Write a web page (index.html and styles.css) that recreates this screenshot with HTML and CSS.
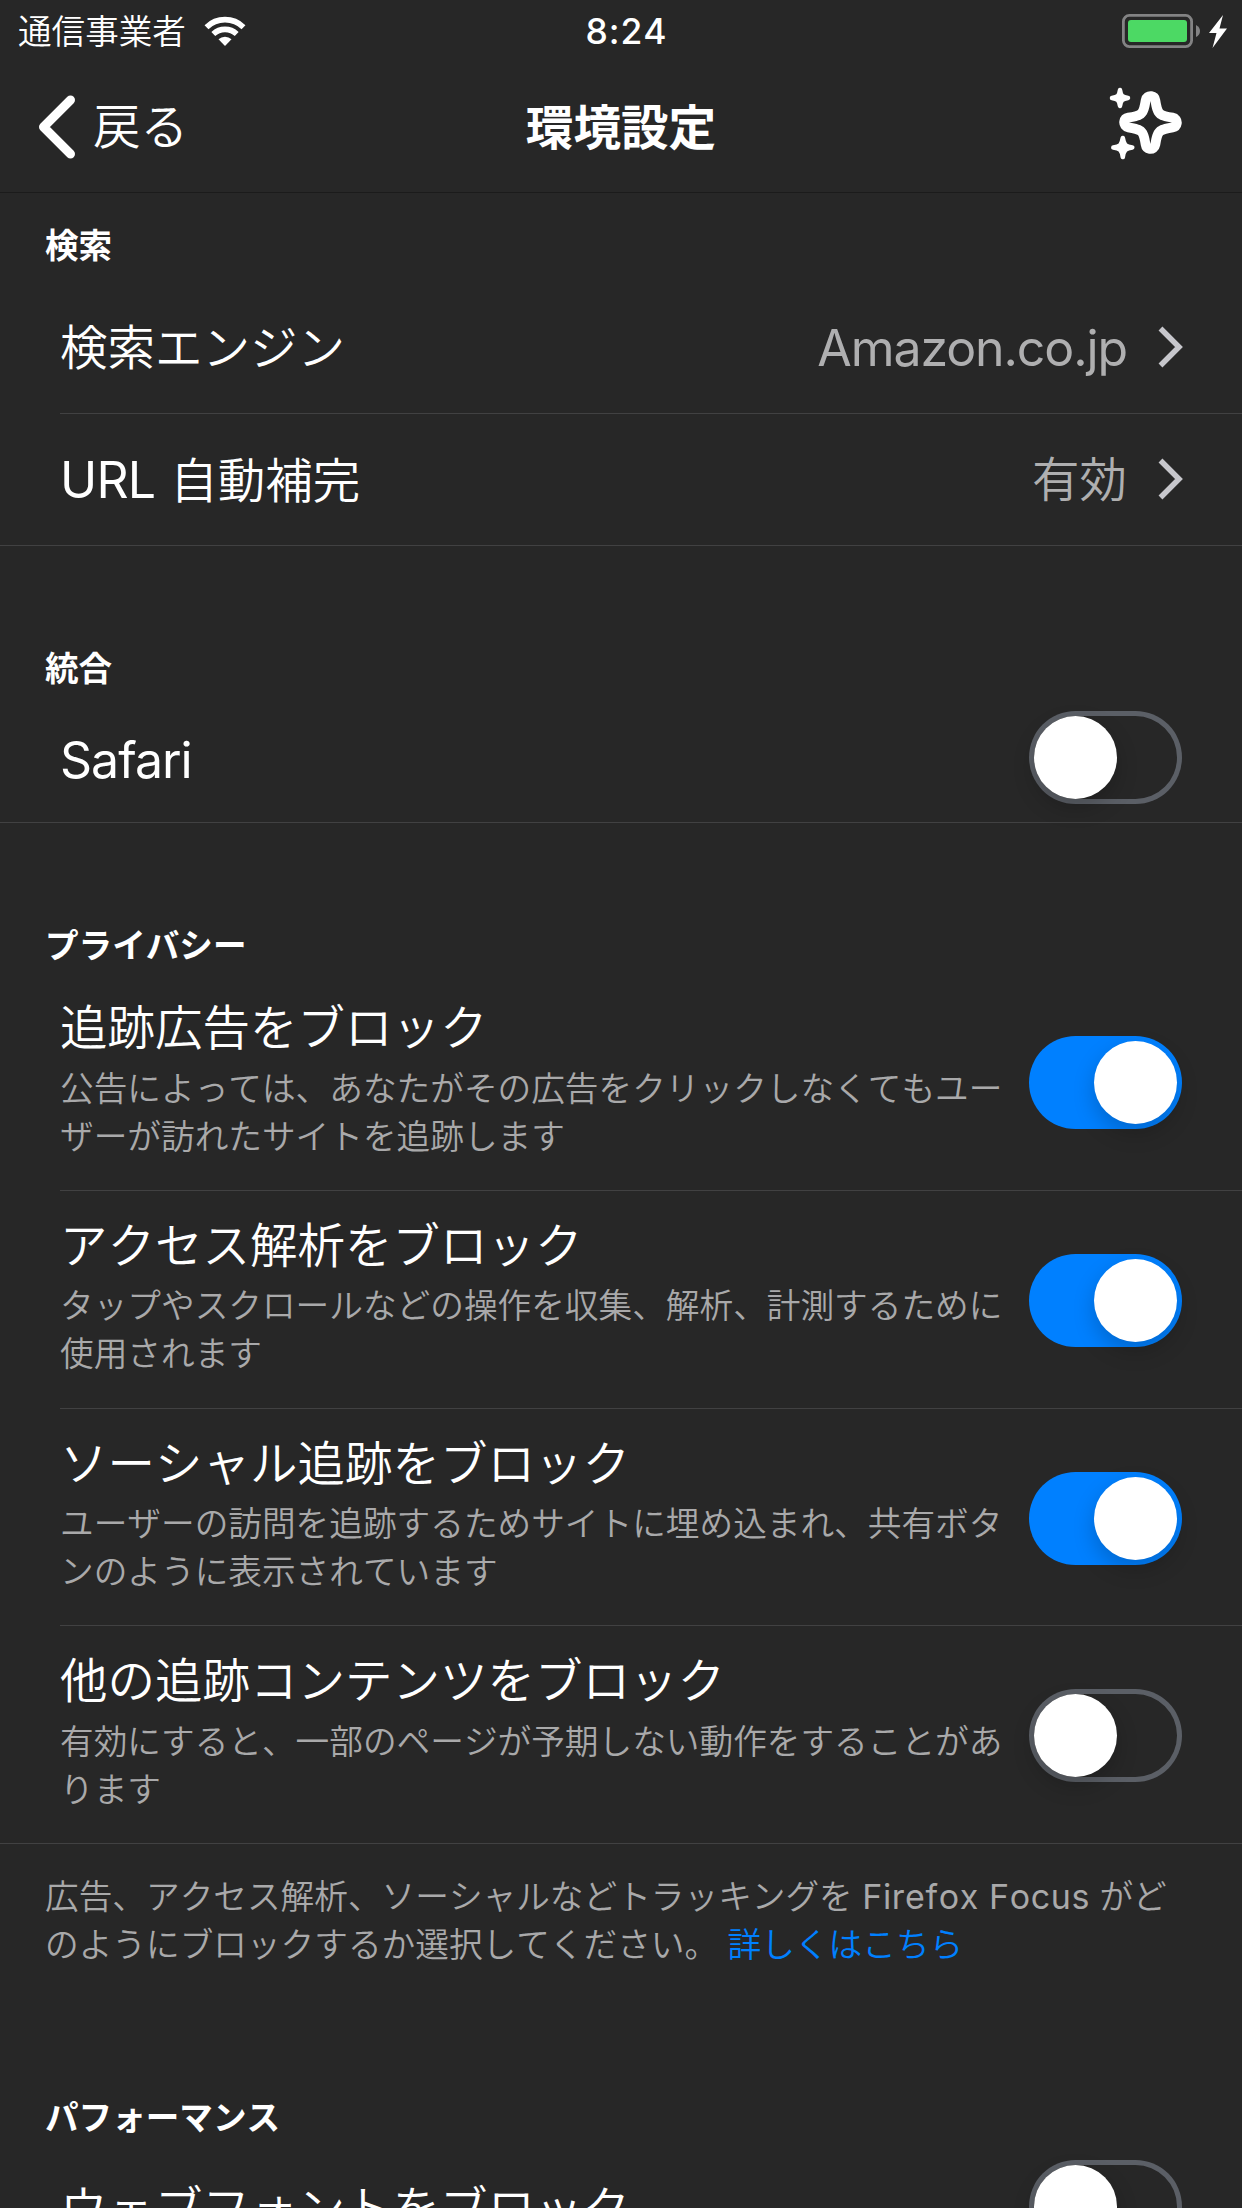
FILE: index.html
```html
<!DOCTYPE html>
<html lang="ja">
<head>
<meta charset="utf-8">
<title>環境設定</title>
<link rel="stylesheet" href="styles.css">
</head>
<body>
<div class="screen">
  <header class="top">
    <div class="status">
      <div class="carrier">
        <span class="carrier-name">通信事業者</span>
        <svg class="wifi" width="44" height="32" viewBox="0 0 44 32">
          <path d="M3.500 12.200A26.500 26.500 0 0 1 40.500 12.200M10.300 19A17 17 0 0 1 33.700 19" fill="none" stroke="#fff" stroke-width="5.600"/>
          <path d="M22 31L15.500 24.300A9.500 9.500 0 0 1 28.500 24.300Z" fill="#fff"/>
        </svg>
      </div>
      <time class="clock">8:24</time>
      <svg class="battery" width="108" height="36" viewBox="0 0 108 36">
        <rect x="1.400" y="1.400" width="68.200" height="31.200" rx="6" fill="none" stroke="#838384" stroke-width="2.800"/>
        <rect x="6" y="6" width="59" height="22" rx="3" fill="#4cd964"/>
        <path d="M74 11Q78 13 78 17T74 23Z" fill="#838384"/>
        <path d="M101 1L87 19H94.500L90.500 34L105 14.500H97.500Z" fill="#fff"/>
      </svg>
    </div>
    <nav class="nav">
      <a class="back">
        <svg width="40" height="66" viewBox="0 0 40 66"><path d="M32.500 6L5.500 33L32.500 60" fill="none" stroke="#fff" stroke-width="9" stroke-linecap="round" stroke-linejoin="round"/></svg>
        <span>戻る</span>
      </a>
      <h1 class="title">環境設定</h1>
      <svg class="sparkles" width="74" height="74" viewBox="0 0 74 74">
        <g transform="translate(41.500 36.500)">
          <path d="M0-21.500C2.500-5.500 5.500-2.500 21.500 0C5.500 2.500 2.500 5.500 0 21.500C-2.500 5.500-5.500 2.500-21.500 0C-5.500-2.500-2.500-5.500 0-21.500Z" fill="#272727" stroke="#fff" stroke-width="19.500" stroke-linejoin="round"/>
          <path d="M0-21.500C2.500-5.500 5.500-2.500 21.500 0C5.500 2.500 2.500 5.500 0 21.500C-2.500 5.500-5.500 2.500-21.500 0C-5.500-2.500-2.500-5.500 0-21.500Z" fill="#272727"/>
        </g>
        <g fill="#fff" stroke="#fff" stroke-width="4.500" stroke-linejoin="round">
          <path d="M11 4C12 10 13 11 19 12C13 13 12 14 11 20C10 14 9 13 3 12C9 11 10 10 11 4Z"/>
          <path d="M13.800 52C15 59 16.500 60.500 23.300 61.500C16.500 62.500 15 64 13.800 71C12.600 64 11.200 62.500 4.300 61.500C11.200 60.500 12.600 59 13.800 52Z"/>
        </g>
      </svg>
    </nav>
  </header>

  <main>
    <section class="group search">
      <h2>検索</h2>
      <div class="row link">
        <span class="label">検索エンジン</span>
        <span class="value"><span class="latin domain">Amazon.co.jp</span></span>
        <svg class="chevron" width="26" height="42" viewBox="0 0 26 42"><path d="M2.500 2.500L21 21L2.500 39.500" fill="none" stroke="#c7c7cc" stroke-width="5.500"/></svg>
      </div>
      <div class="row link last">
        <span class="label"><span class="latin url">URL</span>自動補完</span>
        <span class="value">有効</span>
        <svg class="chevron" width="26" height="42" viewBox="0 0 26 42"><path d="M2.500 2.500L21 21L2.500 39.500" fill="none" stroke="#c7c7cc" stroke-width="5.500"/></svg>
      </div>
    </section>

    <section class="group">
      <h2>統合</h2>
      <div class="row single last">
        <span class="label"><span class="latin">Safari</span></span>
        <span class="switch"></span>
      </div>
    </section>

    <section class="group privacy">
      <h2>プライバシー</h2>
      <div class="row detail">
        <div class="text"><span class="label">追跡広告をブロック</span><p>公告によっては、あなたがその広告をクリックしなくてもユー<br>ザーが訪れたサイトを追跡します</p></div>
        <span class="switch on"></span>
      </div>
      <div class="row detail">
        <div class="text"><span class="label">アクセス解析をブロック</span><p>タップやスクロールなどの操作を収集、解析、計測するために<br>使用されます</p></div>
        <span class="switch on"></span>
      </div>
      <div class="row detail">
        <div class="text"><span class="label">ソーシャル追跡をブロック</span><p>ユーザーの訪問を追跡するためサイトに埋め込まれ、共有ボタ<br>ンのように表示されています</p></div>
        <span class="switch on"></span>
      </div>
      <div class="row detail last">
        <div class="text"><span class="label">他の追跡コンテンツをブロック</span><p>有効にすると、一部のページが予期しない動作をすることがあ<br>ります</p></div>
        <span class="switch"></span>
      </div>
      <p class="note">広告、アクセス解析、ソーシャルなどトラッキングを <span class="brand">Firefox Focus</span> がど<br>のようにブロックするか選択してください。 <a>詳しくはこちら</a></p>
    </section>

    <section class="group performance">
      <h2>パフォーマンス</h2>
      <div class="row single last">
        <span class="label">ウェブフォントをブロック</span>
        <span class="switch"></span>
      </div>
    </section>
  </main>
</div>
</body>
</html>
```
FILE: styles.css
```css
* { box-sizing: border-box; }

body {
  margin: 0;
  background: #272727;
  color: #fff;
  font-family: Inter, "Noto Sans CJK JP", sans-serif;
  font-weight: 350;
  font-kerning: none;
}

h1, h2, p { margin: 0; }
svg { display: block; flex: none; }

.screen {
  width: 1242px;
  height: 2208px;
  overflow: hidden;
}

.top {
  height: 193px;
  border-bottom: 1px solid #1b1b1b;
}

.status {
  height: 60px;
  padding: 2px 12px 0 18px;
  display: grid;
  grid-template-columns: 1fr auto 1fr;
  align-items: center;
}
.carrier { display: flex; align-items: center; gap: 17px; }
.carrier-name { font-size: 33.600px; line-height: 56px; }
.wifi { margin-bottom: 2px; }
.clock {
  margin-left: 5px;
  font-size: 35.500px;
  font-weight: 500;
  line-height: 60px;
  letter-spacing: 0.900px;
}
.battery { justify-self: end; margin-bottom: 1px; }

.nav {
  height: 132px;
  padding: 0 38px;
  display: grid;
  grid-template-columns: 1fr auto 1fr;
  align-items: center;
}
.back { display: flex; align-items: center; gap: 15px; font-size: 47.500px; line-height: 66px; padding-top: 1px; }
.title { padding-top: 3px; font-size: 47.600px; font-weight: 700; line-height: 66px; }
.sparkles { justify-self: end; margin: 0 21px 6px 0; }

.group h2 {
  height: 150px;
  padding: 98px 0 0 45px;
  font-size: 33.600px;
  line-height: 50px;
  font-weight: 700;
}
.search h2 { height: 89px; padding-top: 28px; }

.row {
  height: 132px;
  margin-left: 60px;
  padding-right: 60px;
  border-bottom: 1px solid #414142;
  display: flex;
  align-items: center;
}
.row.last { margin-left: 0; padding-left: 60px; }
.label { font-size: 47.500px; line-height: 64px; white-space: nowrap; }
.latin { font-size: 50px; font-weight: 400; letter-spacing: -1px; font-kerning: normal; }
.url { margin-right: 15px; letter-spacing: -0.800px; }

.link { padding-right: 57px; }
.link .label, .link .value { padding-top: 1px; }
.link .value {
  margin-left: auto;
  color: #afafb0;
  font-size: 47.500px;
  line-height: 64px;
}
.link .domain { letter-spacing: -1.100px; }
.chevron { margin: 0 1px 2px 31px; }

.row.single { height: 127px; padding-bottom: 3px; }
.single .label { padding-top: 6px; }
.single .switch { margin-left: auto; }

.text { width: 960px; }
.row.detail { height: 217.600px; align-items: flex-start; }
.privacy h2 { height: 150.400px; }
.detail .text { padding-top: 23px; }
.detail .label { display: block; }
.detail p, .note {
  color: #a9a9aa;
  font-size: 33.660px;
  line-height: 48px;
  white-space: nowrap;
}
.detail p { padding-top: 4.500px; }
.detail .switch { margin: 63px 0 0 auto; }

.switch {
  width: 153px;
  height: 93px;
  flex: none;
  padding: 5px;
  border-radius: 47px;
  box-shadow: inset 0 0 0 5px #5b5f66;
}
.switch::before {
  content: "";
  display: block;
  width: 83px;
  height: 83px;
  border-radius: 50%;
  background: #fff;
  box-shadow: 0 9px 22px rgba(0, 0, 0, 0.200);
}
.switch.on { background: #0080ff; box-shadow: none; }
.switch.on::before { margin-left: 60px; }

.note { height: 151px; padding: 29px 0 0 45px; }
.brand { font-size: 34px; font-weight: 400; letter-spacing: 0.600px; }
.note a { color: #0080ff; }
```
